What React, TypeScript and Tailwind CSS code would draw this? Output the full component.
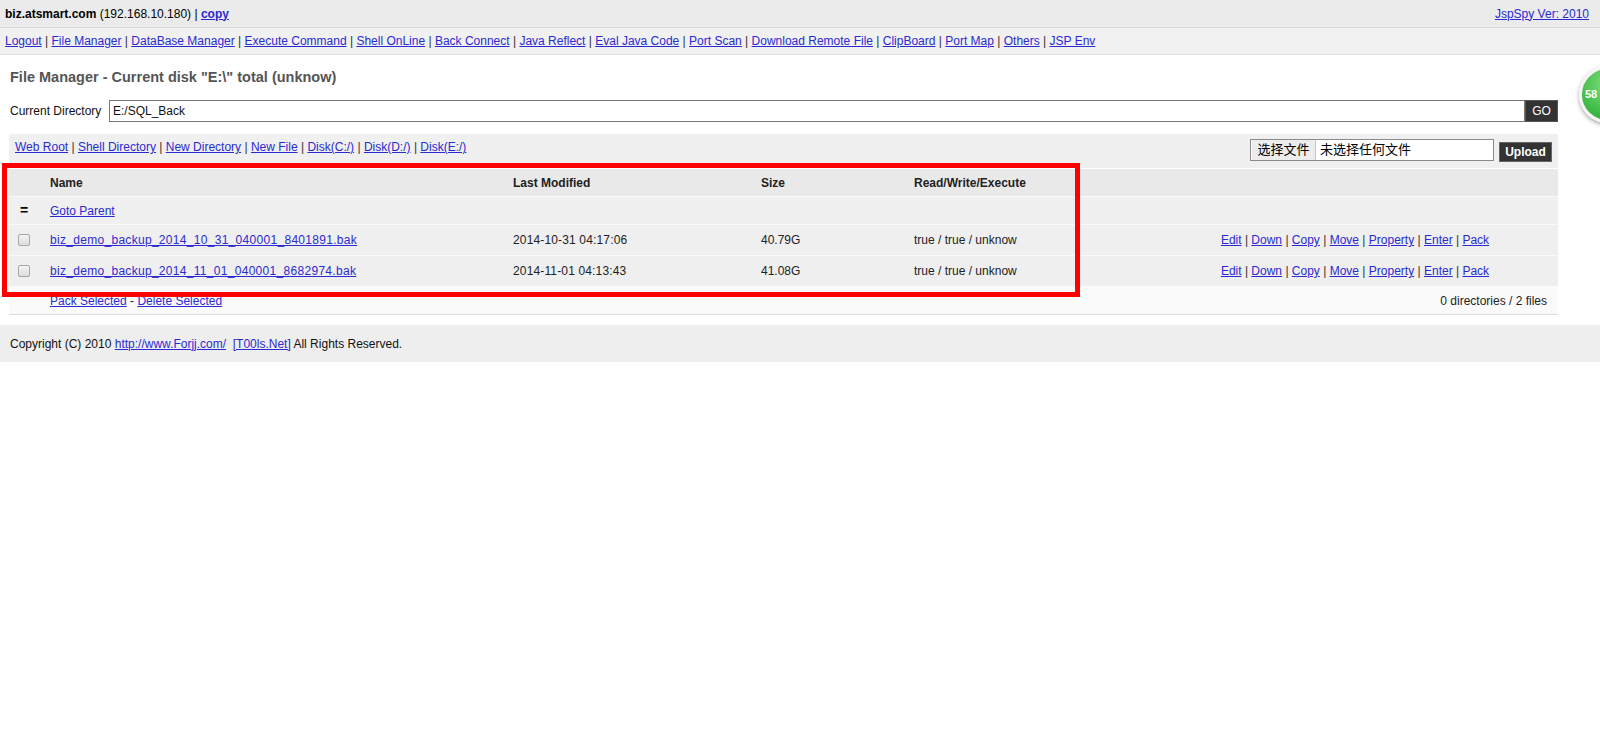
import React from "react";

const navLinks = [
  "Logout",
  "File Manager",
  "DataBase Manager",
  "Execute Command",
  "Shell OnLine",
  "Back Connect",
  "Java Reflect",
  "Eval Java Code",
  "Port Scan",
  "Download Remote File",
  "ClipBoard",
  "Port Map",
  "Others",
  "JSP Env",
];

const dirLinks = ["Web Root", "Shell Directory", "New Directory", "New File", "Disk(C:/)", "Disk(D:/)", "Disk(E:/)"];

const actions = ["Edit", "Down", "Copy", "Move", "Property", "Enter", "Pack"];

const files = [
  { name: "biz_demo_backup_2014_10_31_040001_8401891.bak", modified: "2014-10-31 04:17:06", size: "40.79G" },
  { name: "biz_demo_backup_2014_11_01_040001_8682974.bak", modified: "2014-11-01 04:13:43", size: "41.08G" },
];

const A = ({ children, className = "" }: { children: React.ReactNode; className?: string }) => (
  <a href="#" className={`text-[#2a2ad0] underline ${className}`}>
    {children}
  </a>
);

// joins items with " | " like the old jsp pages
const Piped = ({ items }: { items: string[] }) => (
  <>
    {items.map((t, i) => (
      <React.Fragment key={t}>
        {i > 0 && <span className="text-[#333]"> | </span>}
        <A>{t}</A>
      </React.Fragment>
    ))}
  </>
);

const Checkbox = () => (
  <span className="block w-[12px] h-[12px] rounded-[2px] border border-[#a8a8a8] bg-gradient-to-b from-[#f4f4f4] to-[#dcdcdc]" />
);

const row = "grid grid-cols-[41px_463px_248px_153px_238px_1fr] items-center border-b border-[#fafafa]";

export default function App() {
  return (
    <div className="relative w-[1600px] h-[740px] bg-white text-[12px] text-black overflow-hidden" style={{ fontFamily: '"Liberation Sans", Arial, "Noto Sans CJK SC", sans-serif' }}>
      {/* top bar */}
      <div className="h-[28px] bg-[#ebebeb] border-b border-[#d9d9d9] flex items-center justify-between pl-[5px] pr-[11px]">
        <div>
          <b>biz.atsmart.com</b> (192.168.10.180) | <a href="#" className="text-[#2a2ad0] underline font-bold">copy</a>
        </div>
        <A>JspSpy Ver: 2010</A>
      </div>

      {/* menu */}
      <div className="h-[27px] bg-[#f1f1f1] border-b border-[#dedede] flex items-center pl-[5px]">
        <div>
          <Piped items={navLinks} />
        </div>
      </div>

      <div className="w-[1558px] pl-[9px]">
        <div className="h-[45px] flex items-center pl-[1px] text-[14.5px] font-bold text-[#555]">
          File Manager - Current disk &quot;E:\&quot; total (unknow)
        </div>

        <div className="flex items-center h-[22px]">
          <span className="pl-[1px] w-[100px] text-[#111]">Current Directory</span>
          <div className="flex-1 h-[22px] border border-[#777] bg-white flex items-center pl-[3px] text-[#111]">E:/SQL_Back</div>
          <button className="w-[33px] h-[22px] bg-[#333] text-white text-[12px] border border-[#555]">GO</button>
        </div>

        <div className="mt-[12px] h-[34px] bg-[#f0f0f0] flex justify-between items-start">
          <div className="pl-[6px] pt-[4px]">
            <Piped items={dirLinks} />
          </div>
          <div className="flex items-start pt-[5px] pr-[6px]">
            <div className="w-[244px] h-[22px] border border-[#8a8a8a] bg-white flex items-center">
              <span className="h-[20px] w-[64px] ml-[1px] bg-[#ededed] border-r border-[#c8c8c8] flex items-center justify-center text-[13px]">选择文件</span>
              <span className="pl-[4px] text-[13px]">未选择任何文件</span>
            </div>
            <button className="ml-[5px] mt-[3px] w-[53px] h-[20px] bg-[#333] border border-[#666] text-white font-bold text-[12px]">Upload</button>
          </div>
        </div>

        {/* file table */}
        <div className="mt-[1px] text-[#222]">
          <div className={`${row} h-[28px] bg-[#e9e9e9] font-bold`}>
            <span />
            <span>Name</span>
            <span>Last Modified</span>
            <span>Size</span>
            <span>Read/Write/Execute</span>
            <span />
          </div>
          <div className={`${row} h-[28px] bg-[#f0f0f0]`}>
            <span className="pl-[11px] font-bold text-[14px] text-black">=</span>
            <span>
              <A>Goto Parent</A>
            </span>
            <span />
            <span />
            <span />
            <span />
          </div>
          {files.map((f) => (
            <div key={f.name} className={`${row} h-[31px] bg-[#efefef]`}>
              <span className="pl-[9px]">
                <Checkbox />
              </span>
              <span>
                <A className="tracking-[0.3px]">{f.name}</A>
              </span>
              <span className="tracking-[0.15px]">{f.modified}</span>
              <span>{f.size}</span>
              <span>true / true / unknow</span>
              <span className="text-center">
                <Piped items={actions} />
              </span>
            </div>
          ))}
          <div className="h-[28px] bg-[#fafafa] border-b border-[#dcdcdc] flex items-center justify-between pl-[41px] pr-[11px]">
            <span>
              <A>Pack Selected</A> - <A>Delete Selected</A>
            </span>
            <span>0 directories / 2 files</span>
          </div>
        </div>
      </div>

      {/* footer */}
      <div className="mt-[10px] h-[37px] bg-[#eeeeee] flex items-center pl-[10px] text-[#111]">
        <span>
          Copyright (C) 2010 <A>http://www.Forjj.com/</A>&nbsp; <A>[T00ls.Net]</A> All Rights Reserved.
        </span>
      </div>

      {/* highlight box drawn over the table */}
      <div className="absolute left-[2px] top-[163px] w-[1078px] h-[134px] border-[5px] border-[#ff0000]" />

      {/* floating speed ball, mostly off screen */}
      <div className="absolute left-[1579px] top-[66px] w-[57px] h-[57px] rounded-full border-[3px] border-[#f4f4f4] shadow-[0_2px_4px_rgba(0,0,0,0.35)] bg-[radial-gradient(circle_at_50%_30%,#7de07f,#3db843_70%,#2f9d36)] flex items-center pl-[3px]">
        <span className="text-white font-bold text-[11px]">58</span>
      </div>
    </div>
  );
}
